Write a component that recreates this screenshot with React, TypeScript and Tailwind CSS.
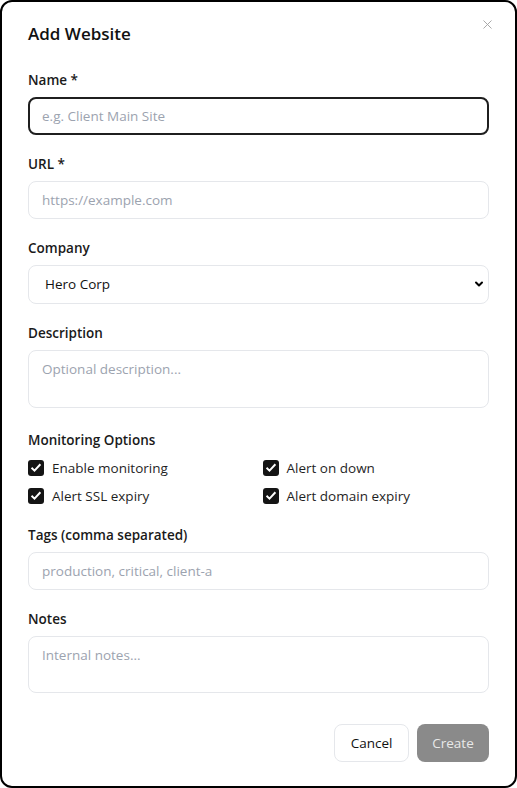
import { X, ChevronDown } from 'lucide-react';

const font = { fontFamily: '"Open Sans", "Noto Sans", sans-serif' };

function Field({ label, children }: { label: string; children: React.ReactNode }) {
  return (
    <div className="flex flex-col">
      <label className="text-[13.5px] leading-[20px] font-semibold text-[#1a1a1a] mb-[7px]">{label}</label>
      {children}
    </div>
  );
}

function Check({ label }: { label: string }) {
  return (
    <label className="flex items-center gap-2 h-5 text-[13.5px] text-[#1f1f1f]">
      <span className="w-4 h-4 rounded-[3px] bg-[#141414] flex items-center justify-center">
        <svg viewBox="0 0 16 16" className="w-3 h-3" fill="none" stroke="white" strokeWidth="2.6" strokeLinecap="square">
          <path d="M3 8.5l3 3 7-7.5" />
        </svg>
      </span>
      {label}
    </label>
  );
}

const inputCls =
  'w-full h-[38px] px-[13px] rounded-lg border border-[#e5e7eb] bg-white text-[13.5px] text-[#111] placeholder:text-[#9ca3af] outline-none';

export default function App() {
  return (
    <div style={font} className="w-[517px] h-[788px] bg-white">
      <div className="relative w-full h-full border-2 border-black rounded-[12px] bg-white px-[26px] pt-[18px]">
        <button className="absolute right-[20px] top-[15px] text-[#a3a3a3]">
          <X className="w-[15px] h-[15px]" strokeWidth={1.5} />
        </button>

        <h2 className="text-[17px] leading-[28px] font-semibold text-[#111] mb-[22px]">Add Website</h2>

        <div className="flex flex-col">
          <Field label="Name *">
            <input
              className="w-full h-[38px] px-[12px] rounded-lg border-2 border-[#1f1f1f] bg-white text-[13.5px] placeholder:text-[#9ca3af] outline-none"
              placeholder="e.g. Client Main Site"
            />
          </Field>

          <div className="mt-[19px]">
            <Field label="URL *">
              <input className={inputCls} placeholder="https://example.com" />
            </Field>
          </div>

          <div className="mt-[19px]">
            <Field label="Company">
              <div className="relative">
                <select className="w-full h-[39px] pl-[16px] pr-8 rounded-lg border border-[#e5e7eb] bg-white text-[13.5px] text-[#111] outline-none appearance-none">
                  <option>Hero Corp</option>
                </select>
                <ChevronDown className="absolute right-[4px] top-[13px] w-[12px] h-[12px] text-black pointer-events-none" strokeWidth={4} />
              </div>
            </Field>
          </div>

          <div className="mt-[19px]">
            <Field label="Description">
              <textarea
                className="w-full h-[58px] px-[13px] py-[8px] rounded-lg border border-[#e5e7eb] bg-white text-[13.5px] placeholder:text-[#9ca3af] outline-none resize-none"
                placeholder="Optional description..."
              />
            </Field>
          </div>

          <div className="flex flex-col mt-[22px]">
            <div className="text-[13.5px] leading-[20px] font-semibold text-[#1a1a1a] mb-[8px]">Monitoring Options</div>
            <div className="grid grid-cols-2 gap-x-2 gap-y-2">
              <Check label="Enable monitoring" />
              <Check label="Alert on down" />
              <Check label="Alert SSL expiry" />
              <Check label="Alert domain expiry" />
            </div>
          </div>

          <div className="mt-[19px]">
            <Field label="Tags (comma separated)">
              <input className={inputCls} placeholder="production, critical, client-a" />
            </Field>
          </div>

          <div className="mt-[19px]">
            <Field label="Notes">
              <textarea
                className="w-full h-[57px] px-[13px] py-[8px] rounded-lg border border-[#e5e7eb] bg-white text-[13.5px] placeholder:text-[#9ca3af] outline-none resize-none"
                placeholder="Internal notes..."
              />
            </Field>
          </div>
        </div>

        <div className="flex justify-end gap-2 mt-[31px]">
          <button className="h-[38px] w-[75px] rounded-lg border border-[#e5e7eb] bg-white text-[13.5px] text-[#111]">Cancel</button>
          <button className="h-[38px] w-[72px] rounded-lg bg-[#8a8a8a] text-[13.5px] text-[#e8e8e8]">Create</button>
        </div>
      </div>
    </div>
  );
}
